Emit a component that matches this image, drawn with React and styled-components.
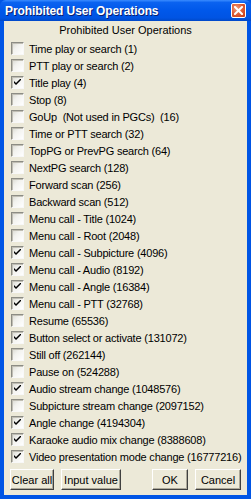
import React from 'react'
import styled, { createGlobalStyle } from 'styled-components'

const GlobalStyle = createGlobalStyle`
    html, body {
        margin: 0;
        padding: 0;
        overflow: hidden;
        background: #ffffff;
    }
`

const operations = [
    ['Time play or search (1)', false],
    ['PTT play or search (2)', false],
    ['Title play (4)', true],
    ['Stop (8)', false],
    ['GoUp  (Not used in PGCs)  (16)', false],
    ['Time or PTT search (32)', false],
    ['TopPG or PrevPG search (64)', false],
    ['NextPG search (128)', false],
    ['Forward scan (256)', false],
    ['Backward scan (512)', false],
    ['Menu call - Title (1024)', false],
    ['Menu call - Root (2048)', false],
    ['Menu call - Subpicture (4096)', true],
    ['Menu call - Audio (8192)', true],
    ['Menu call - Angle (16384)', true],
    ['Menu call - PTT (32768)', true],
    ['Resume (65536)', false],
    ['Button select or activate (131072)', true],
    ['Still off (262144)', false],
    ['Pause on (524288)', false],
    ['Audio stream change (1048576)', true],
    ['Subpicture stream change (2097152)', false],
    ['Angle change (4194304)', true],
    ['Karaoke audio mix change (8388608)', true],
    ['Video presentation mode change (16777216)', true],
]

function CloseButton() {
    return (
        <Close>
            <svg width="9" height="9" viewBox="0 0 9 9">
                <path d="M1 1 L8 8 M8 1 L1 8" stroke="#ffffff" strokeWidth="2" strokeLinecap="square" />
            </svg>
        </Close>
    )
}

function CheckRow({ label, checked }) {
    return (
        <Row>
            <Box>
                {checked && (
                    <svg width="7" height="7" viewBox="0 0 7 7">
                        <path d="M0 2 L0 4 L2 6 L7 1 L7 -1 L2 4 Z" fill="#000000" />
                    </svg>
                )}
            </Box>
            <Label>{label}</Label>
        </Row>
    )
}

export default function App() {
    return (
        <>
            <GlobalStyle />
            <Window>
                <TitleBar>
                    <Title>Prohibited User Operations</Title>
                    <CloseButton />
                </TitleBar>
                <Client>
                    <Heading>Prohibited User Operations</Heading>
                    <List>
                        {operations.map(([label, checked]) => (
                            <CheckRow key={label} label={label} checked={checked} />
                        ))}
                    </List>
                    <Buttons>
                        <Button $w={44}>Clear all</Button>
                        <Button $w={60}>Input value</Button>
                        <Spacer />
                        <Button $w={36}>OK</Button>
                        <Button $w={46}>Cancel</Button>
                    </Buttons>
                </Client>
            </Window>
        </>
    )
}

const uiFont = `"Liberation Sans", Arial, sans-serif`

const Window = styled.div`
    width: 251px;
    height: 499px;
    box-sizing: border-box;
    display: flex;
    flex-direction: column;
    background: #0055e5;
    padding: 0 4px 4px 4px;
    font-family: ${uiFont};
`

const TitleBar = styled.div`
    height: 22px;
    margin: 0 -4px;
    padding: 0 5px 0 5px;
    display: flex;
    align-items: center;
    justify-content: space-between;
    background: linear-gradient(to bottom, #3a8cff 0%, #0a62f0 12%, #0058ea 50%, #0054e3 85%, #0048c8 100%);
    border-radius: 6px 6px 0 0;
`

const Title = styled.span`
    color: #ffffff;
    font-weight: bold;
    font-size: 12px;
    letter-spacing: -0.1px;
    text-shadow: 1px 1px 0 #0a1e6e;
    white-space: nowrap;
`

const Close = styled.div`
    width: 13px;
    height: 13px;
    border: 1px solid #ffffff;
    border-radius: 2px;
    display: flex;
    align-items: center;
    justify-content: center;
    background: radial-gradient(circle at 35% 35%, #f0a080 0%, #e0603a 45%, #c43a14 100%);
`

const Client = styled.div`
    flex: 1;
    background: #ece9d8;
    display: flex;
    flex-direction: column;
    padding: 0 6px 5px 6px;
`

const Heading = styled.div`
    height: 19px;
    line-height: 18px;
    text-align: center;
    font-size: 11px;
    color: #000000;
`

const List = styled.div`
    display: flex;
    flex-direction: column;
`

const Row = styled.div`
    height: 17px;
    display: flex;
    align-items: center;
    gap: 5px;
    padding-left: 1px;
`

const Box = styled.div`
    width: 13px;
    height: 13px;
    box-sizing: border-box;
    flex: none;
    display: flex;
    align-items: center;
    justify-content: center;
    background: linear-gradient(135deg, #d8d8d0 0%, #f2f2ee 40%, #ffffff 100%);
    border: 1px solid;
    border-color: #8c8c84 #f8f8f8 #f8f8f8 #8c8c84;
    box-shadow: inset 1px 1px 0 #c0beb4;
`

const Label = styled.span`
    font-size: 11px;
    letter-spacing: -0.2px;
    color: #000000;
    white-space: pre;
`

const Buttons = styled.div`
    margin-top: 4px;
    display: flex;
    gap: 7px;
`

const Spacer = styled.div`
    flex: 1;
`

const Button = styled.button`
    width: ${p => p.$w}px;
    height: 21px;
    padding: 0;
    margin: 0;
    flex: none;
    white-space: nowrap;
    font-family: ${uiFont};
    font-size: 11px;
    color: #000000;
    background: #ece9d8;
    border: 1px solid;
    border-color: #ffffff #404040 #404040 #ffffff;
    box-shadow: inset -1px -1px 0 #aca899;
`
